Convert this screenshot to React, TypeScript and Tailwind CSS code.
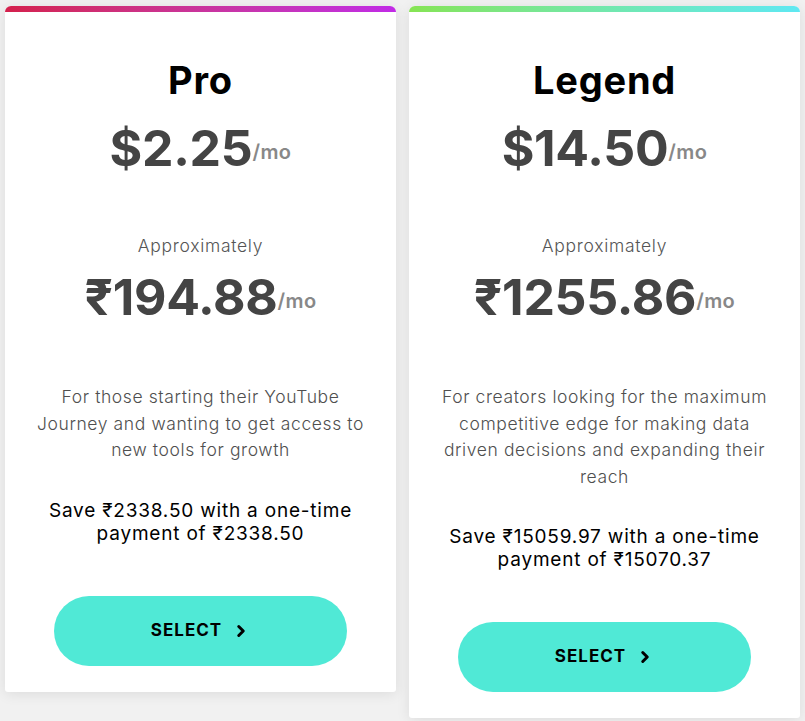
import { ChevronRight } from "lucide-react"

type Plan = {
  name: string
  usd: string
  inr: string
  desc: string[]
  save: string[]
  bar: string
}

const plans: Plan[] = [
  {
    name: "Pro",
    usd: "$2.25",
    inr: "₹194.88",
    desc: [
      "For those starting their YouTube",
      "Journey and wanting to get access to",
      "new tools for growth",
    ],
    save: ["Save ₹2338.50 with a one-time", "payment of ₹2338.50"],
    bar: "bg-gradient-to-r from-[#d4204c] to-[#c12ae6]",
  },
  {
    name: "Legend",
    usd: "$14.50",
    inr: "₹1255.86",
    desc: [
      "For creators looking for the maximum",
      "competitive edge for making data",
      "driven decisions and expanding their",
      "reach",
    ],
    save: ["Save ₹15059.97 with a one-time", "payment of ₹15070.37"],
    bar: "bg-gradient-to-r from-[#86e452] to-[#5fe8f2]",
  },
]

function Price({ value }: { value: string }) {
  return (
    <div className="flex items-baseline h-[60px]">
      <span className="text-[50px] leading-[60px] font-bold text-[#444] tracking-[-0.3px]">
        {value}
      </span>
      <span className="text-[20px] font-semibold text-[#888] tracking-[0.4px] -translate-y-[7px]">
        /mo
      </span>
    </div>
  )
}

function PlanCard({ plan }: { plan: Plan }) {
  return (
    <div className="w-[391px] bg-white rounded-t-[6px] rounded-b-[3px] shadow-[0_2px_14px_rgba(0,0,0,0.09)] flex flex-col items-center text-center">
      <div className={`h-[6px] w-full rounded-t-[6px] ${plan.bar}`} />

      <h2 className="mt-[45px] text-[38px] leading-[46px] font-bold text-black tracking-[0.8px]">
        {plan.name}
      </h2>

      <div className="mt-[15px]">
        <Price value={plan.usd} />
      </div>

      <div className="mt-[56px] text-[17.5px] leading-[24px] font-light text-[#555] tracking-[0.7px]">
        Approximately
      </div>

      <div className="mt-[9px]">
        <Price value={plan.inr} />
      </div>

      <p className="mt-[57px] text-[17.5px] leading-[26.5px] font-light text-[#4f4f4f] tracking-[0.6px]">
        {plan.desc.map((line, i) => (
          <span key={i} className="block whitespace-nowrap">
            {line}
          </span>
        ))}
      </p>

      <p className="mt-[35px] text-[19px] leading-[23px] font-normal text-black tracking-[0.8px]">
        {plan.save.map((line, i) => (
          <span key={i} className="block whitespace-nowrap">
            {line}
          </span>
        ))}
      </p>

      <button className="mt-[51px] mb-[26px] w-[293px] h-[70px] rounded-full bg-[#50e9d6] flex items-center justify-center gap-[10px] text-[17px] font-bold tracking-[1px] text-black">
        SELECT
        <ChevronRight size={18} strokeWidth={4} />
      </button>
    </div>
  )
}

export default function App() {
  return (
    <main
      className="min-h-screen bg-[#f1f1f1] flex items-start gap-[13px] pl-[5px] pt-[6px]"
      style={{ fontFamily: "Inter, 'Noto Sans', sans-serif" }}
    >
      {plans.map((p) => (
        <PlanCard key={p.name} plan={p} />
      ))}
    </main>
  )
}
